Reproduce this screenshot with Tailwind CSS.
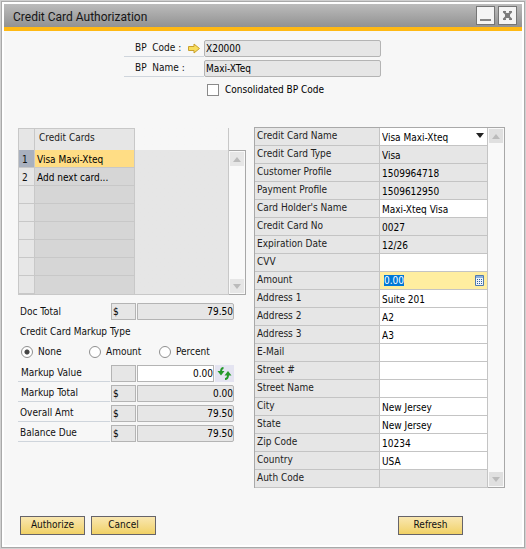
<!DOCTYPE html>
<html lang="en">
<head>
<meta charset="utf-8">
<meta name="viewport" content="width=device-width, initial-scale=1">
<title>Credit Card Authorization</title>
<script src="https://cdn.jsdelivr.net/npm/@tailwindcss/browser@4"></script>
</head>
<body class="flex min-h-screen bg-[#d0d0d0] p-px font-['DejaVu_Sans_Condensed','Noto_Sans',sans-serif] text-[10px] leading-[14px] text-[#111]">
<main class="flex flex-1 flex-col border border-[#a9a9a9] bg-white p-[2px]">
  <header class="flex h-[27px] shrink-0 items-center border-b-4 border-[#ffb914] bg-linear-to-b from-[#bcbcbc] to-[#929292] pr-[5px] pl-[9px]">
    <h1 class="flex-1 pt-[2px] font-['Roboto',sans-serif] text-[12px] leading-[20px] text-[#161616]">Credit Card Authorization</h1>
    <div class="flex gap-[3px]">
      <button type="button" aria-label="Minimize" class="flex size-[19px] items-center justify-center border border-[#757575] bg-[#f4f4f4]">
        <svg class="size-[17px]" viewBox="0 0 17 17"><path d="M3 13h11" stroke="#858585" stroke-width="2"/></svg>
      </button>
      <button type="button" aria-label="Close" class="flex size-[19px] items-center justify-center border border-[#757575] bg-[#f4f4f4]">
        <svg class="size-[17px]" viewBox="0 0 17 17"><path d="M4.500 4.500l8 8M12.500 4.500l-8 8" stroke="#7b7b7b" stroke-width="2"/><path d="M4 4.500h3M10 4.500h3M4 12.500h3M10 12.500h3" stroke="#7b7b7b"/><path d="M6 6h5v5h-5z" fill="#7b7b7b"/></svg>
      </button>
    </div>
  </header>

  <form class="flex flex-1 flex-col bg-[#f7f7f7] pt-[9px] pr-[17px] pb-[10px] pl-[14px]">
    <section class="ml-[106px] flex w-[257px] flex-col gap-[3px]">
      <div class="flex">
        <div class="flex w-[80px] items-center justify-between border-b border-[#cfd5dc] pr-[4px] pl-[11px]">
          <label for="code" class="whitespace-pre">BP  Code :</label>
          <svg class="h-[11px] w-[12px]" viewBox="0 0 12 11"><path d="M.5 3.500h5.500v-2.500l5.500 4.500-5.500 4.500v-2.500H.5z" fill="#f8dd5c" stroke="#c9a02c"/></svg>
        </div>
        <input id="code" readonly value="X20000" class="h-[17px] min-w-0 flex-1 rounded-[2px] border border-[#b4b4b4] bg-[#e6e6e6] px-px text-black">
      </div>
      <div class="flex">
        <div class="flex w-[80px] items-center border-b border-[#cfd5dc] pl-[11px]">
          <label for="name" class="whitespace-pre">BP  Name :</label>
        </div>
        <input id="name" readonly value="Maxi-XTeq" class="h-[17px] min-w-0 flex-1 rounded-[2px] border border-[#b4b4b4] bg-[#e6e6e6] px-px text-black">
      </div>
      <label class="ml-[83px] flex h-[18px] items-center gap-[6px] pt-[2px] whitespace-nowrap text-black">
        <input type="checkbox" class="size-[12px] appearance-none border border-[#8a8a8a] bg-white checked:bg-[#555]">Consolidated BP Code
      </label>
    </section>

    <div class="mt-[29px] grid grid-cols-[228px_minmax(0,1fr)] gap-[8px]">
      <section class="pt-px">
        <div class="flex">
          <div class="min-w-0 flex-1 border-r border-b border-[#c8c8c8] bg-linear-to-b from-[#f7f7f7] from-[22px] to-[#e6e6e6] to-[22px]">
            <table class="w-[117px] table-fixed border-separate border-spacing-0 border-l border-[#c8c8c8] text-left [&_tbody_td]:h-[18px] [&_tbody_td]:border-r [&_tbody_td]:border-b [&_tbody_td]:border-[#c8c8c8] [&_tbody_td]:bg-[#d6d6d6] [&_tbody_td]:pt-[2px] [&_tbody_td]:pb-0 [&_tbody_td]:pl-[2px] [&_tbody_th]:border-r [&_tbody_th]:border-b [&_tbody_th]:border-[#c8c8c8] [&_tbody_th]:bg-[#e6e6e6] [&_tbody_th]:pt-[2px] [&_tbody_th]:pb-0 [&_tbody_th]:pl-[3px] [&_th]:font-normal">
              <thead><tr class="h-[22px]"><th class="w-[16px] border-t border-r border-[#c8c8c8] bg-[#e6e6e6]"></th><th class="border-t border-r border-[#c8c8c8] bg-[#e6e6e6] pb-[4px] pl-[4px] text-[#222]">Credit Cards</th></tr></thead>
              <tbody>
                <tr><th class="bg-[#a9b1bf]!">1</th><td class="bg-[#ffdd85]! text-black">Visa Maxi-Xteq</td></tr>
                <tr><th>2</th><td class="text-black">Add next card...</td></tr>
                <tr><th></th><td></td></tr>
                <tr><th></th><td></td></tr>
                <tr><th></th><td></td></tr>
                <tr><th></th><td></td></tr>
                <tr><th></th><td></td></tr>
                <tr><th></th><td class="border-b-0!"></td></tr>
              </tbody>
            </table>
          </div>
          <div class="mt-[22px] flex w-[17px] flex-col justify-between border-y border-r border-[#a8a8a8] bg-[#f9f9f9] p-px">
            <span class="flex h-[14px] items-center justify-center bg-[#e6e6e6]"><svg class="h-[5px] w-[8px]" viewBox="0 0 8 5"><path d="M0 5l4-5 4 5z" fill="#bbb"/></svg></span>
            <span class="flex h-[14px] items-center justify-center bg-[#e6e6e6]"><svg class="h-[5px] w-[8px]" viewBox="0 0 8 5"><path d="M0 0l4 5 4-5z" fill="#bbb"/></svg></span>
          </div>
        </div>

        <div class="mt-[8px] flex w-[216px] gap-px">
          <label for="doc" class="flex flex-1 items-center pl-[2px]">Doc Total</label>
          <input aria-label="Doc total currency" readonly value="$" class="h-[17px] w-[25px] border border-[#b4b4b4] bg-[#e6e6e6] px-px text-black">
          <input id="doc" readonly value="79.50" class="h-[17px] w-[97px] rounded-r-[2px] border border-[#b4b4b4] bg-[#e6e6e6] text-right text-black">
        </div>

        <fieldset class="mt-[5px]">
          <legend class="pl-[2px]">Credit Card Markup Type</legend>
          <div class="mt-[6px] flex h-[14px] items-center pl-[3px]">
            <label class="flex w-[68px] items-center gap-[5px]"><input type="radio" name="markup" checked class="size-[12px] appearance-none rounded-full border border-[#8f8f8f] bg-white checked:bg-radial checked:from-[#444] checked:from-[2px] checked:to-white checked:to-[3px]">None</label>
            <label class="flex w-[70px] items-center gap-[5px]"><input type="radio" name="markup" class="size-[12px] appearance-none rounded-full border border-[#8f8f8f] bg-white checked:bg-radial checked:from-[#444] checked:from-[2px] checked:to-white checked:to-[3px]">Amount</label>
            <label class="flex items-center gap-[5px]"><input type="radio" name="markup" class="size-[12px] appearance-none rounded-full border border-[#8f8f8f] bg-white checked:bg-radial checked:from-[#444] checked:from-[2px] checked:to-white checked:to-[3px]">Percent</label>
          </div>
        </fieldset>

        <div class="mt-[6px] flex w-[216px] flex-col gap-[3px]">
          <div class="flex gap-px">
            <label for="mval" class="flex flex-1 items-center border-b border-[#cfd5dc] pl-[3px]">Markup Value</label>
            <input aria-label="Markup currency" readonly class="h-[17px] w-[25px] border border-[#b4b4b4] bg-[#e6e6e6] px-px">
            <input id="mval" value="0.00" class="h-[17px] w-[77px] border border-[#b4b4b4] bg-white text-right text-black">
            <button type="button" aria-label="Recalculate" class="flex h-[17px] w-[19px] items-center justify-center bg-[#e4e4f1]">
              <svg class="h-[13px] w-[15px]" viewBox="0 0 15 13"><g fill="none" stroke="#259a2b" stroke-width="2"><path d="M6.500 1Q4 1 4 5"/><path d="M8 12Q11 12 11 8"/></g><path d="M.5 4h7l-3.500 4.500zM7.500 8.500h7l-3.500-4.500z" fill="#259a2b"/></svg>
            </button>
          </div>
          <div class="flex gap-px">
            <label for="mtot" class="flex flex-1 items-center border-b border-[#cfd5dc] pl-[3px]">Markup Total</label>
            <input aria-label="Markup total currency" readonly value="$" class="h-[17px] w-[25px] border border-[#b4b4b4] bg-[#e6e6e6] px-px text-black">
            <input id="mtot" readonly value="0.00" class="h-[17px] w-[97px] rounded-r-[2px] border border-[#b4b4b4] bg-[#e6e6e6] text-right text-black">
          </div>
          <div class="flex gap-px">
            <label for="oamt" class="flex flex-1 items-center border-b border-[#cfd5dc] pl-[2px]">Overall Amt</label>
            <input aria-label="Overall currency" readonly value="$" class="h-[17px] w-[25px] border border-[#b4b4b4] bg-[#e6e6e6] px-px text-black">
            <input id="oamt" readonly value="79.50" class="h-[17px] w-[97px] rounded-r-[2px] border border-[#b4b4b4] bg-[#e6e6e6] text-right text-black">
          </div>
          <div class="flex gap-px">
            <label for="bal" class="flex flex-1 items-center border-b border-[#cfd5dc] pl-[2px]">Balance Due</label>
            <input aria-label="Balance currency" readonly value="$" class="h-[17px] w-[25px] border border-[#b4b4b4] bg-[#e6e6e6] px-px text-black">
            <input id="bal" readonly value="79.50" class="h-[17px] w-[97px] rounded-r-[2px] border border-[#b4b4b4] bg-[#e6e6e6] text-right text-black">
          </div>
        </div>
      </section>

      <section class="flex self-start">
        <table class="min-w-0 flex-1 table-fixed border-separate border-spacing-0 border-t border-l border-[#a9a9a9] text-left text-[#222] [&_input]:block [&_input]:h-[17px] [&_input]:w-full [&_input]:bg-white [&_input]:pt-[2px] [&_input]:pl-[2px] [&_input]:text-black [&_input]:outline-none [&_input:read-only]:bg-[#e6e6e6] [&_td]:border-r [&_td]:border-b [&_td]:border-[#c4c4c4] [&_td]:p-0 [&_th]:h-[18px] [&_th]:w-[125px] [&_th]:border-r [&_th]:border-b [&_th]:border-[#c4c4c4] [&_th]:bg-[#e6e6e6] [&_th]:pt-0 [&_th]:pb-[2px] [&_th]:pl-[2px] [&_th]:font-normal">
          <tbody>
          <tr><th><label for="f1">Credit Card Name</label></th><td class="relative"><select id="f1" class="block h-[17px] w-full appearance-none bg-white pt-[2px] pl-[2px] text-black"><option>Visa Maxi-Xteq</option></select><svg class="pointer-events-none absolute top-[5px] right-[3px] h-[5px] w-[8px]" viewBox="0 0 8 5"><path d="M0 0h8l-4 5z" fill="#222"/></svg></td></tr>
          <tr><th><label for="f2">Credit Card Type</label></th><td><input id="f2" readonly value="Visa"></td></tr>
          <tr><th><label for="f3">Customer Profile</label></th><td><input id="f3" readonly value="1509964718"></td></tr>
          <tr><th><label for="f4">Payment Profile</label></th><td><input id="f4" readonly value="1509612950"></td></tr>
          <tr><th><label for="f5">Card Holder's Name</label></th><td><input id="f5" value="Maxi-Xteq Visa"></td></tr>
          <tr><th><label for="f6">Credit Card No</label></th><td><input id="f6" readonly value="0027"></td></tr>
          <tr><th><label for="f7">Expiration Date</label></th><td><input id="f7" readonly value="12/26"></td></tr>
          <tr><th><label for="f8">CVV</label></th><td><input id="f8"></td></tr>
          <tr><th><label for="f9">Amount</label></th><td><div class="flex items-center bg-[#ffeea0] pr-[3px]"><input id="f9" value="0.00" class="min-w-0 flex-1 bg-[#ffeea0]! pt-0! pl-[4px]! selection:bg-[#0078d7] selection:text-white"><svg class="h-[11px] w-[9px] shrink-0" viewBox="0 0 9 11"><path d="M.5.5h8v10h-8z" fill="#eef4fb" stroke="#4f7ab0"/><path d="M1 1h7v2H1z" fill="#8db1dc"/><path d="M2 4.500h5M2 6.500h5M2 8.500h5" stroke="#2f5f9c" stroke-dasharray="1 1"/></svg></div></td></tr>
          <tr><th><label for="f10">Address 1</label></th><td><input id="f10" value="Suite 201"></td></tr>
          <tr><th><label for="f11">Address 2</label></th><td><input id="f11" value="A2"></td></tr>
          <tr><th><label for="f12">Address 3</label></th><td><input id="f12" value="A3"></td></tr>
          <tr><th><label for="f13">E-Mail</label></th><td><input id="f13"></td></tr>
          <tr><th><label for="f14">Street #</label></th><td><input id="f14"></td></tr>
          <tr><th><label for="f15">Street Name</label></th><td><input id="f15"></td></tr>
          <tr><th><label for="f16">City</label></th><td><input id="f16" value="New Jersey"></td></tr>
          <tr><th><label for="f17">State</label></th><td><input id="f17" value="New Jersey"></td></tr>
          <tr><th><label for="f18">Zip Code</label></th><td><input id="f18" value="10234"></td></tr>
          <tr><th><label for="f19">Country</label></th><td><input id="f19" value="USA"></td></tr>
          <tr><th><label for="f20">Auth Code</label></th><td><input id="f20" readonly></td></tr>
          </tbody>
        </table>
        <div class="flex w-[17px] flex-col justify-between border-y border-r border-[#a8a8a8] bg-[#f9f9f9] p-px">
          <span class="flex h-[14px] items-center justify-center bg-[#e0e0e0]"><svg class="h-[5px] w-[8px]" viewBox="0 0 8 5"><path d="M0 5l4-5 4 5z" fill="#bbb"/></svg></span>
          <span class="flex h-[14px] items-center justify-center bg-[#e0e0e0]"><svg class="h-[5px] w-[8px]" viewBox="0 0 8 5"><path d="M0 0l4 5 4-5z" fill="#bbb"/></svg></span>
        </div>
      </section>
    </div>

    <footer class="mt-auto flex gap-[6px] pr-[42px] pl-[2px]">
      <button type="button" class="h-[19px] w-[65px] border border-[#66646a] bg-linear-to-b from-[#f9e7b0] to-[#f1d164] pb-px">Authorize</button>
      <button type="button" class="h-[19px] w-[65px] border border-[#66646a] bg-linear-to-b from-[#f9e7b0] to-[#f1d164] pb-px">Cancel</button>
      <button type="button" class="ml-auto h-[19px] w-[65px] border border-[#66646a] bg-linear-to-b from-[#f9e7b0] to-[#f1d164] pb-px">Refresh</button>
    </footer>
  </form>
</main>
<script>
  const amount = document.getElementById('f9');
  amount.focus();
  amount.select();
</script>
</body>
</html>
